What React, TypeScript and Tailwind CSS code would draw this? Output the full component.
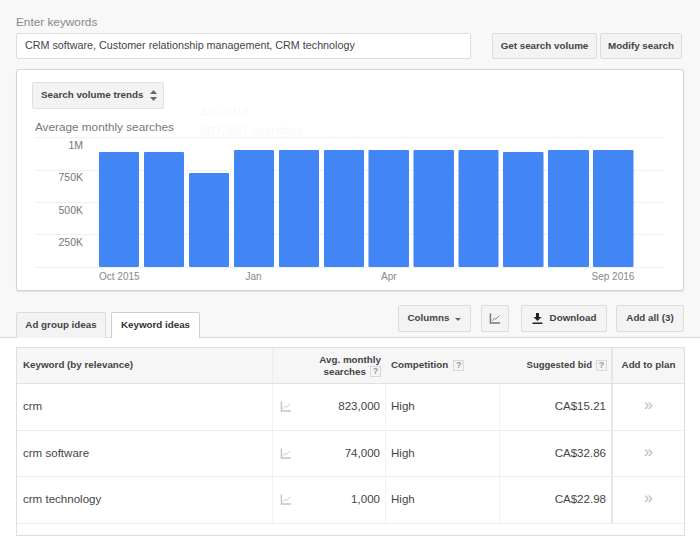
import React from "react";

const Btn = ({ className = "", children }: { className?: string; children: React.ReactNode }) => (
  <div className={`flex items-center justify-center rounded-[2px] border border-[#dcdcdc] bg-[#f3f3f3] font-bold text-[#444] ${className}`}>{children}</div>
);

const TrendIcon = ({ color, className = "" }: { color: string; className?: string }) => (
  <svg viewBox="0 0 12 12" className={className} fill="none" stroke={color}>
    <path d="M1 0.5V11H11.5" strokeWidth="1.6" />
    <path d="M3 8.5L5.2 5.8L6.8 6.8L10.5 3" strokeWidth="1" />
  </svg>
);

const Help = () => (
  <span className="inline-flex h-[11px] w-[11px] items-center justify-center border border-[#d8d8d8] bg-[#f4f4f4] text-[9px] font-bold leading-none text-[#999]">?</span>
);

const bars: [number, number, number][] = [
  [99, 40, 152], [144, 40, 152], [189, 40, 173], [234, 40, 150], [279, 40, 150], [324, 40, 150],
  [368.5, 40.5, 150], [413.5, 40.5, 150], [458.5, 40, 150], [503, 40.5, 152], [548, 41, 150], [593, 40.5, 150],
];

const Chart = () => (
  <svg width="665" height="180" viewBox="0 0 665 180" className="absolute left-0 top-0 overflow-visible" style={{ fontFamily: "'Liberation Sans', Arial, sans-serif" }}>
    {[137.5, 170.5, 202.5, 234.5, 267.5].map((y) => (
      <line key={y} x1="35" x2="665" y1={y - 110} y2={y - 110} stroke="#f0f0f0" />
    ))}
    {bars.map(([x, w, y]) => (
      <rect key={x} x={x} y={y - 110} width={w} height={267 - y} rx="1" fill="#4285f4" />
    ))}
    {[["1M", 149], ["750K", 181], ["500K", 214], ["250K", 246]].map(([t, y]) => (
      <text key={t} x="83" y={(y as number) - 110} textAnchor="end" fontSize="10.5" fill="#777">{t}</text>
    ))}
    {[["Oct 2015", 99], ["Jan", 245.5], ["Apr", 381], ["Sep 2016", 591.5]].map(([t, x]) => (
      <text key={t} x={x as number} y={170} fontSize="10" fill="#888">{t}</text>
    ))}
    <text x="200" y="6" fontSize="12" fill="#f9f9f9">Jan 2016</text>
    <text x="200" y="24.5" fontSize="13" fill="#f9f9f9">897,880 searches</text>
    <text x="35" y="21" fontSize="11.75" fill="#777">Average monthly searches</text>
  </svg>
);

const rows = [
  ["crm", "823,000", "CA$15.21"],
  ["crm software", "74,000", "CA$32.86"],
  ["crm technology", "1,000", "CA$22.98"],
];

const gridCols = "grid grid-cols-[256px_113px_114px_113px_1fr]";

export default function App() {
  return (
    <div className="relative flex h-[536px] w-[700px] flex-col overflow-hidden bg-[#f8f8f8] font-['Liberation_Sans',Arial,sans-serif]">
      <div className="flex h-[305px] shrink-0 flex-col px-4 pt-[15px]">
        <div className="h-[18px] shrink-0 text-[11.8px] leading-[15px] text-[#888]">Enter keywords</div>
        <div className="flex h-[26px] shrink-0 items-stretch">
          <div className="flex w-[455px] items-center rounded-[2px] border border-[#dcdcdc] bg-white pb-px pl-2 text-[10.75px] text-[#444]">
            CRM software, Customer relationship management, CRM technology
          </div>
          <Btn className="ml-[21px] w-[105px] text-[9.8px]">Get search volume</Btn>
          <Btn className="ml-[3px] w-[82px] text-[9.8px]">Modify search</Btn>
        </div>
        <div className="relative mt-[10px] h-[222px] w-[668px] shrink-0 rounded-[3px] border border-[#d4d4d4] bg-white shadow-[0_1px_1px_#e0e0e0]">
          <div className="absolute -left-[17px] top-[40px]">
            <Chart />
          </div>
          <div className="relative ml-[15px] mt-[12px] flex h-[27px] w-[132px] items-center whitespace-nowrap rounded-[2px] border border-[#e0e0e0] bg-[#f3f3f3] pl-2 text-[9.8px] font-bold text-[#444]">
            Search volume trends
            <svg width="7" height="11" viewBox="0 0 7 11" className="ml-[7px]" fill="#666">
              <path d="M3.5 0L7 4H0Z" />
              <path d="M3.5 11L0 7H7Z" />
            </svg>
          </div>
        </div>
      </div>

      <div className="relative z-10 -mb-px flex h-[33px] shrink-0 items-end px-4">
        <div className="flex h-[26px] w-[90px] items-center justify-center rounded-t-[2px] border border-b-0 border-[#dcdcdc] bg-[#f3f3f3] text-[9.8px] font-bold text-[#444]">Ad group ideas</div>
        <div className="ml-[5px] flex h-[26px] w-[89px] items-center justify-center rounded-t-[2px] border border-b-0 border-[#d0d0d0] bg-white text-[9.8px] font-bold text-[#333]">Keyword ideas</div>
        <div className="mb-[6px] ml-auto flex h-[27px] items-stretch">
          <Btn className="w-[73px] gap-[6px] text-[9.8px]">
            Columns
            <span className="mt-px h-0 w-0 border-x-[3px] border-t-[3px] border-x-transparent border-t-[#666]" />
          </Btn>
          <Btn className="ml-[10px] w-[28px]"><TrendIcon color="#777" className="h-[11px] w-[12px]" /></Btn>
          <Btn className="ml-[12px] w-[86px] gap-[7px] text-[9.8px]">
            <svg width="11" height="11" viewBox="0 0 11 11" fill="#222">
              <path d="M4 0H7V4H9.5L5.5 8L1.5 4H4Z" />
              <path d="M0.5 9.5H10.5V11H0.5Z" />
            </svg>
            Download
          </Btn>
          <Btn className="ml-[9px] w-[68px] text-[9.8px]">Add all (3)</Btn>
        </div>
      </div>

      <div className="flex-1 border-t border-[#d8d8d8] bg-white pl-4 pt-[9px]">
        <div className="h-[189px] w-[669px] border border-[#dedede]">
          <div className={`${gridCols} h-[36px] border-b border-[#e2e2e2] bg-[#f6f6f6] text-[9.8px] font-bold text-[#444]`}>
            <div className="flex items-center border-r border-[#ececec] pl-[6px]">Keyword (by relevance)</div>
            <div className="flex flex-col justify-center pr-[5px] text-right leading-[12px]">
              <span>Avg. monthly</span>
              <span className="flex items-center justify-end gap-[4px]">searches <Help /></span>
            </div>
            <div className="flex items-center gap-[5px] pl-[5px]">Competition <Help /></div>
            <div className="flex items-center justify-end gap-[4px] border-r-2 border-[#e6e6e6] pr-[4px] text-[9.5px]">Suggested bid <Help /></div>
            <div className="flex items-center justify-center">Add to plan</div>
          </div>
          {rows.map(([k, v, b]) => (
            <div key={k} className={`${gridCols} h-[46.6px] border-b border-[#ececec] text-[11.55px] text-[#444]`}>
              <div className="flex items-center border-r border-[#f2f2f2] pl-[6px]">{k}</div>
              <div className="flex items-center justify-between border-r border-[#f2f2f2] pl-[7px] pr-[5px]">
                <TrendIcon color="#c4c4c4" className="h-[11px] w-[12px]" />
                {v}
              </div>
              <div className="flex items-center border-r border-[#f2f2f2] pl-[5px]">High</div>
              <div className="flex items-center justify-end border-r-2 border-[#e6e6e6] pr-[5px]">{b}</div>
              <div className="flex items-center justify-center pb-[3px] text-[16px] text-[#bbb]">»</div>
            </div>
          ))}
        </div>
      </div>
    </div>
  );
}
